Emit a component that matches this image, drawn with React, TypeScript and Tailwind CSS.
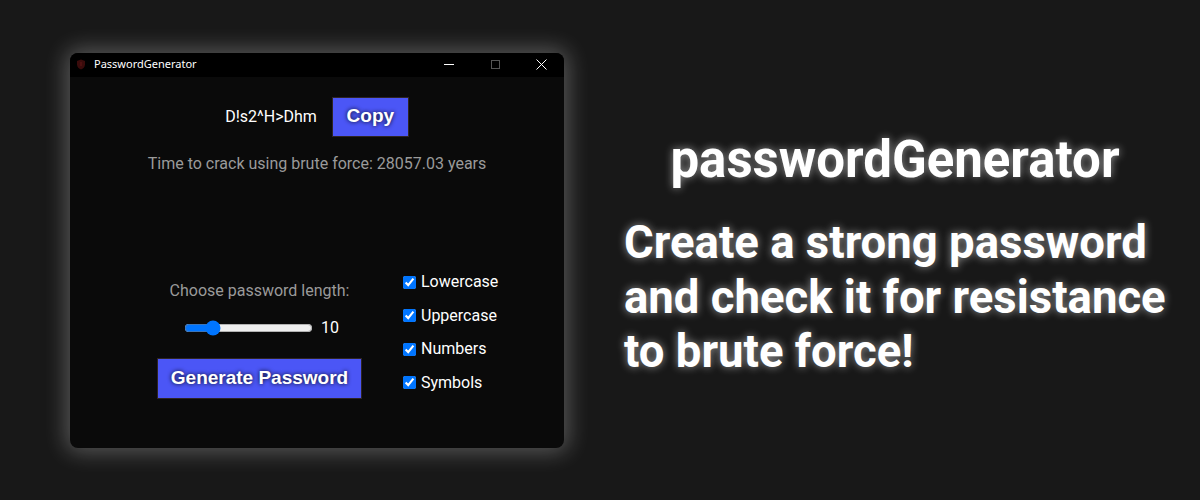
import React from "react";

export default function App() {
  const roboto = { fontFamily: "Roboto, 'Noto Sans', sans-serif" };
  return (
    <div
      className="w-[1200px] h-[500px] bg-[#181818] flex items-center overflow-hidden"
      style={roboto}
    >
      {/* Window */}
      <div className="ml-[70px] w-[494px] h-[395px] rounded-[8px] bg-[#0a0a0a] overflow-hidden flex flex-col shadow-[0_0_22px_4px_rgba(255,255,255,0.28)] shrink-0">
        {/* Title bar */}
        <div className="h-[24px] bg-black flex items-center shrink-0">
          <svg width="10" height="11" viewBox="0 0 10 11" className="ml-[6px]">
            <path d="M5 0.5 L9 2 V5.5 C9 8 7 9.8 5 10.5 C3 9.8 1 8 1 5.5 V2 Z" fill="#3a0b0b" />
            <rect x="4.4" y="3" width="1.2" height="4" fill="#5a1515" />
          </svg>
          <span
            className="ml-[8px] text-[11px] text-white"
            style={{ fontFamily: "'Noto Sans', 'Open Sans', sans-serif" }}
          >
            PasswordGenerator
          </span>
          <div className="ml-auto flex items-center h-full">
            <div className="w-[46px] h-full flex items-center justify-center">
              <div className="w-[10px] h-[1px] bg-white" />
            </div>
            <div className="w-[46px] h-full flex items-center justify-center">
              <div className="w-[9px] h-[9px] border border-[#555]" />
            </div>
            <div className="w-[46px] h-full flex items-center justify-center">
              <svg width="11" height="11" viewBox="0 0 11 11">
                <path d="M0.5 0.5 L10.5 10.5 M10.5 0.5 L0.5 10.5" stroke="white" strokeWidth="1" />
              </svg>
            </div>
          </div>
        </div>

        {/* Body */}
        <div className="flex flex-col items-center pt-[20px]">
          <div className="flex items-center gap-[15px]">
            <span className="text-[16px] text-white">D!s2^H&gt;Dhm</span>
            <button
              className="w-[77px] h-[40px] bg-[#4b56f6] border border-[#2e2424] text-white text-[19px] font-bold [text-shadow:0_0_4px_rgba(0,0,0,0.9)]"
              style={{ fontFamily: "'Liberation Sans', Arial, sans-serif" }}
            >
              Copy
            </button>
          </div>
          <div className="mt-[15px] text-[16px] text-[#9a9a9a]">
            Time to crack using brute force: 28057.03 years
          </div>

          <div className="mt-[102px] flex w-full">
            <div className="ml-[87px] w-[205px] flex flex-col items-center">
              <div className="text-[16px] text-[#9a9a9a] leading-[20px] mt-[3px]">
                Choose password length:
              </div>
              <div className="mt-[15px] flex items-center gap-[8px] ml-[4px]">
                <input
                  type="range"
                  min={5}
                  max={32}
                  defaultValue={10}
                  className="w-[129px] accent-[#0075ff]"
                />
                <span className="text-[16px] text-white">10</span>
              </div>
              <button
                className="mt-[18px] w-[205px] h-[41px] bg-[#4b56f6] border border-[#2e2424] text-white text-[19px] font-bold [text-shadow:0_0_4px_rgba(0,0,0,0.9)]"
                style={{ fontFamily: "'Liberation Sans', Arial, sans-serif" }}
              >
                Generate Password
              </button>
            </div>
            <div className="ml-[41px] flex flex-col gap-[12.5px] -mt-[6px]">
              {["Lowercase", "Uppercase", "Numbers", "Symbols"].map((l) => (
                <label key={l} className="flex items-center h-[21px] text-[16px] text-white">
                  <input type="checkbox" defaultChecked className="w-[13px] h-[13px] accent-[#0075ff] m-0" />
                  <span className="ml-[5px]">{l}</span>
                </label>
              ))}
            </div>
          </div>
        </div>
      </div>

      {/* Right text */}
      <div className="ml-[60px] w-[542px] self-start mt-[130px] text-white [text-shadow:0_0_8px_rgba(255,255,255,0.55)]">
        <div className="text-center text-[51px] font-bold leading-[60px]">
          passwordGenerator
        </div>
        <div className="mt-[26px] text-[45.5px] font-bold leading-[54.5px] whitespace-nowrap">
          Create a strong password
          <br />
          and check it for resistance
          <br />
          to brute force!
        </div>
      </div>
    </div>
  );
}
